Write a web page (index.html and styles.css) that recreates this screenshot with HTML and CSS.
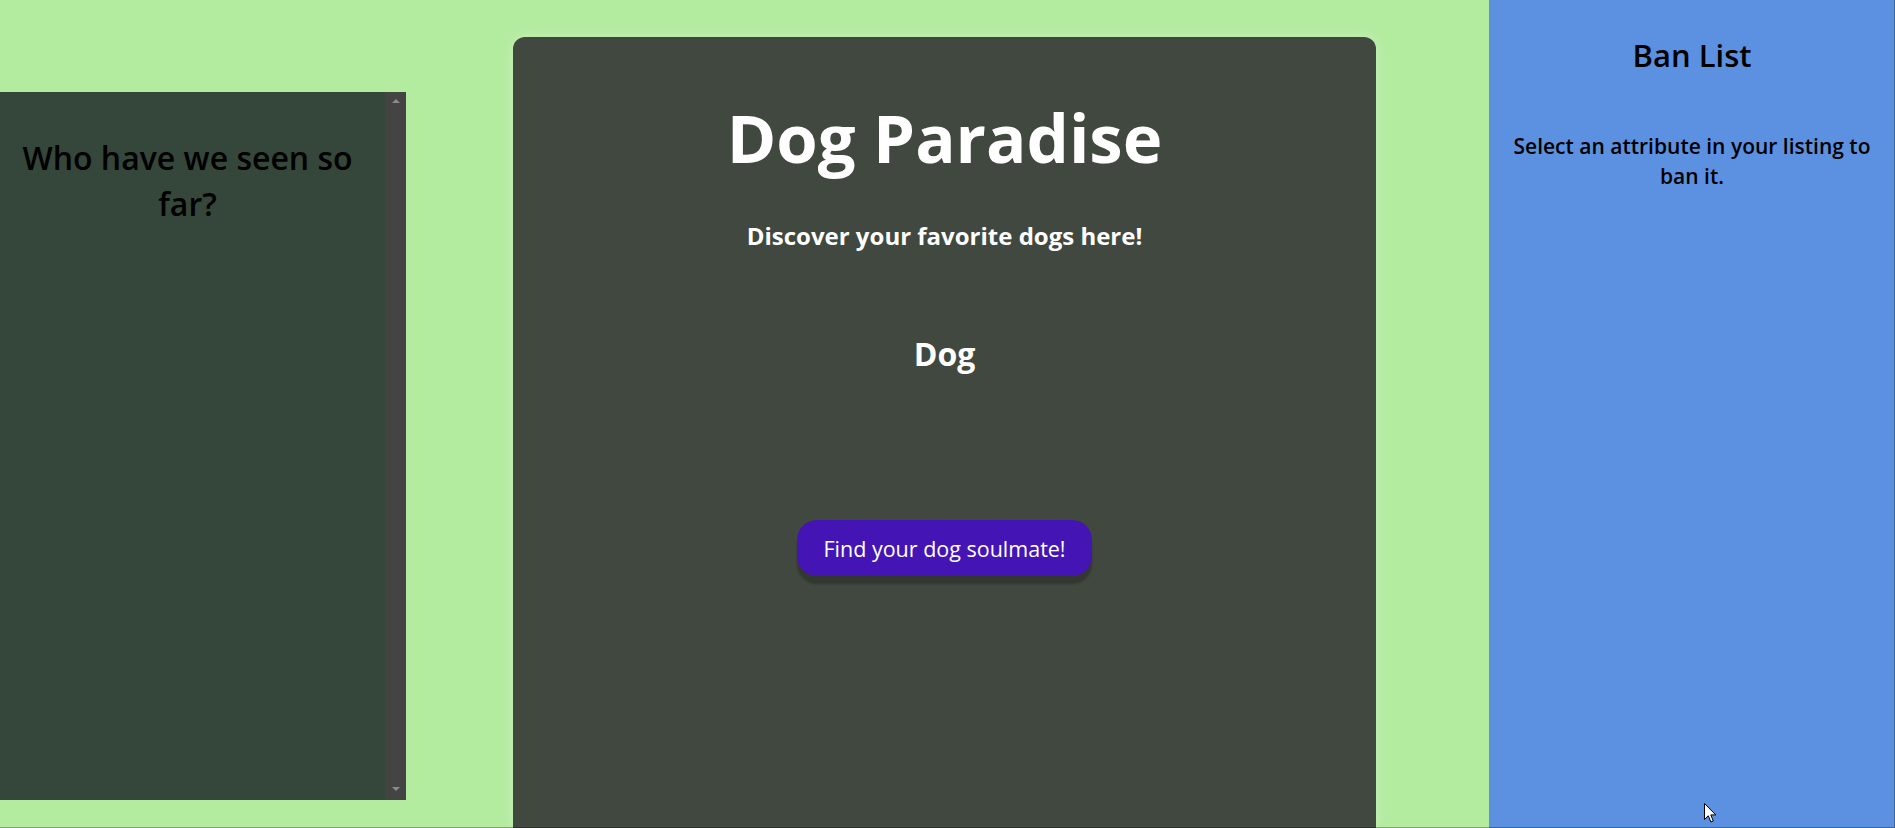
FILE: index.html
```html
<!DOCTYPE html>
<html lang="en">
<head>
<meta charset="utf-8">
<title>Dog Paradise</title>
<link rel="stylesheet" href="styles.css">
</head>
<body>
<div class="page">
  <aside class="history">
    <div class="history-content">
      <h2 class="history-title">Who have we seen so far?</h2>
    </div>
    <div class="scrollbar">
      <span class="arrow arrow-up"></span>
      <span class="arrow arrow-down"></span>
    </div>
  </aside>

  <main class="card">
    <h1 class="title">Dog Paradise</h1>
    <h3 class="subtitle">Discover your favorite dogs here!</h3>
    <h2 class="dog-name">Dog</h2>
    <button class="discover-btn" type="button">Find your dog soulmate!</button>
  </main>

  <aside class="ban">
    <h2 class="ban-title">Ban List</h2>
    <p class="ban-text">Select an attribute in your listing to ban it.</p>
  </aside>
</div>
<div class="frame"></div>
<svg class="cursor" width="13" height="20" viewBox="0 0 13 20" aria-hidden="true">
  <path d="M0.5 0.5 L0.5 16.5 L4.3 12.8 L6.9 19 L9.3 18 L6.8 11.9 L11.8 11.9 Z" fill="#fff" stroke="#000" stroke-width="1" stroke-linejoin="miter"/>
</svg>
</body>
</html>
```

FILE: styles.css
```css
* {
  box-sizing: border-box;
}

html, body {
  margin: 0;
  padding: 0;
  height: 100%;
}

body {
  background: #b3eb9f;
  font-family: "Open Sans", "Liberation Sans", sans-serif;
  overflow: hidden;
}

.page {
  display: flex;
  align-items: flex-start;
  height: 828px;
}

/* Left: history panel */
.history {
  display: flex;
  width: 406px;
  height: 708px;
  margin-top: 92px;
  background: #35463a;
  flex-shrink: 0;
}

.history-content {
  flex: 1;
  padding: 0 26px 0 16px;
}

.history-title {
  margin: 43px 0 0;
  font-size: 32px;
  line-height: 46px;
  font-weight: 600;
  color: #000;
  text-align: center;
}

.scrollbar {
  width: 21px;
  background: #444444;
  display: flex;
  flex-direction: column;
  justify-content: space-between;
  align-items: center;
  padding: 7px 0 9px;
}

.arrow {
  width: 0;
  height: 0;
  border-left: 4px solid transparent;
  border-right: 4px solid transparent;
}

.arrow-up {
  border-bottom: 4px solid #8a8a8a;
}

.arrow-down {
  border-top: 4px solid #8a8a8a;
}

/* Center card */
.card {
  width: 863px;
  height: 791px;
  margin-top: 37px;
  margin-left: 107px;
  background: #41483f;
  border-radius: 12px 12px 0 0;
  box-shadow: 0 0 14px rgba(255, 255, 255, 0.3);
  display: flex;
  flex-direction: column;
  align-items: center;
  color: #fff;
  flex-shrink: 0;
}

.title {
  margin: 60px 0 0;
  font-size: 67px;
  line-height: 80px;
  font-weight: 700;
}

.subtitle {
  margin: 43px 0 0;
  font-size: 24px;
  line-height: 32px;
  font-weight: 700;
}

.dog-name {
  margin: 80px 0 0;
  font-size: 32px;
  line-height: 44px;
  font-weight: 700;
}

.discover-btn {
  margin-top: 144px;
  width: 295px;
  height: 56px;
  border: none;
  border-radius: 20px;
  background: #4415b4;
  color: #fff;
  font-family: inherit;
  font-size: 21.5px;
  font-weight: 500;
  box-shadow: 0 8px 2px rgba(25, 25, 25, 0.35);
  cursor: pointer;
}

/* Right: ban panel */
.ban {
  margin-left: auto;
  width: 406px;
  height: 828px;
  background: #5b91e0;
  text-align: center;
  color: #000;
  padding: 0 20px;
  flex-shrink: 0;
}

.ban-title {
  margin: 34px 0 0;
  font-size: 31px;
  line-height: 42px;
  font-weight: 600;
}

.ban-text {
  margin: 55px 0 0;
  font-size: 21px;
  line-height: 30px;
  font-weight: 600;
}

.frame {
  position: fixed;
  inset: 0;
  pointer-events: none;
  box-shadow: inset -1px -1px 0 rgba(0, 0, 0, 0.3);
}

.cursor {
  position: fixed;
  left: 1704px;
  top: 803px;
}
```
